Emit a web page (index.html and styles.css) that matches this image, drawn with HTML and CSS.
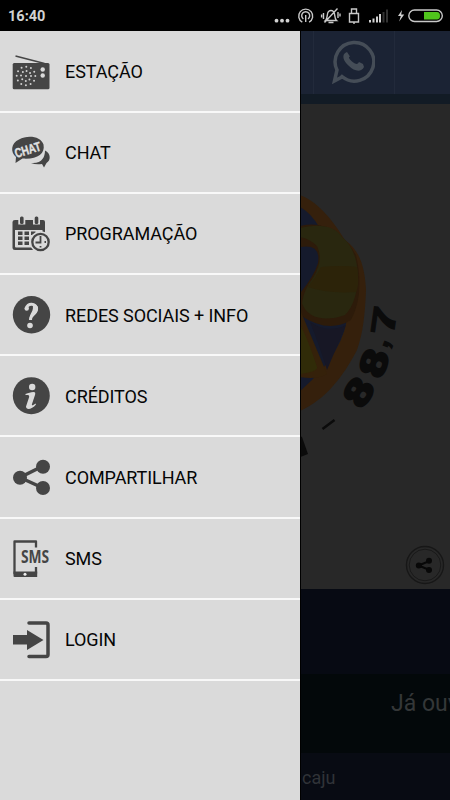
FILE: index.html
```html
<!DOCTYPE html>
<html lang="pt-BR">
<head>
<meta charset="utf-8">
<title>Rádio</title>
<link rel="stylesheet" href="styles.css">
</head>
<body>
<header class="status">
  <span class="clock">16:40</span>
  <svg class="status-icons" width="180" height="31" viewBox="270 0 180 31" fill="none" stroke="#c9c9c9" stroke-width="1.4">
    <g fill="#d2d2d2" stroke="none"><circle cx="276.500" cy="20.700" r="1.900"/><circle cx="282" cy="20.700" r="1.900"/><circle cx="287.500" cy="20.700" r="1.900"/></g>
    <path d="M302.300 22.200a7 7 0 1 1 6.800 0M303.400 19a4 4 0 1 1 4.600 0M305.700 15v7"/>
    <path d="M325.500 20.500c2.500-2 1-7 3-9q2.500-2 5 0c2 2 .5 7 3 9zM328.500 22.500h5M324.500 22.500L337.500 8.500M323.500 13v6M321.600 14.500v3M338 12v6M340 13.500v3"/>
    <path d="M349.500 13.500h9v8.500h-9zM351.500 13V9h5v4M354 22v2"/>
    <g fill="#d2d2d2" stroke="none"><path d="M369 20h2v2.500h-2zM372.500 18.500h2V22.500h-2zM376 16.500h2v6h-2zM379 14h2v8.500h-2z"/><path fill="#333" d="M382.500 12h2v10.500h-2zM386 9.500h2v13h-2z"/><path d="M402 10l-4 6h2.800l-1.600 5.500 5-7h-3z"/></g>
    <rect x="408.800" y="10" width="33.500" height="11.500" rx="5.700"/>
    <path fill="#50c51c" stroke="none" d="M424 12h13q3 0 3 3.800t-3 3.800h-13z"/>
  </svg>
</header>
<div class="screen">
  <nav class="drawer">
    <a class="item"><svg class="icon" viewBox="0 0 40 40"><path d="M5.500 4l29 7.500" stroke="#454545" stroke-width="1.500"/><rect x="2.700" y="11" width="36.800" height="26.300" rx="1.500"/><g fill="#dadada"><circle cx="32.700" cy="17.500" r="2.200"/><circle cx="32.700" cy="23.500" r="2.200"/></g><g fill="none" stroke="#d0d0d0" stroke-width="2" stroke-linecap="round"><circle cx="16" cy="24" r="9.300" stroke-dasharray="0 4.869"/><circle cx="16" cy="24" r="5" stroke-dasharray="0 3.927"/><path d="M16 24h.01"/></g></svg><span>ESTAÇÃO</span></a>
    <a class="item"><svg class="icon" viewBox="0 0 40 40"><path d="M21 30c11 1 14-6 14-12.500 6 3 6 10 1.500 12.500l-2.500 4.500-2-3.500q-6 1-11-1z"/><path d="M5.500 30l.5-6C0 19 1 10 9 6.500c9-5 22-3 24.500 5 2 10-7 15-21 14z"/><text x="6" y="25" transform="rotate(-17 6 24)" font-family="Liberation Sans" font-weight="700" font-size="13" textLength="26.500" lengthAdjust="spacingAndGlyphs" fill="#e2e2e2" stroke="#e2e2e2" stroke-width=".4">CHAT</text></svg><span>CHAT</span></a>
    <a class="item"><svg class="icon" viewBox="0 0 40 40"><path d="M5 6h28q2 0 2 2v28H5q-2.500 0-2.500-2.500V8q0-2 2.500-2z"/><path fill="#dadada" d="M5 16h27.500v17.500H6q-1 0-1-1zM8.300 2.500h7v8h-7zM23 2.500h7v8h-7z"/><rect x="10" y="2.500" width="3.600" height="7.500" rx="1.500"/><rect x="24.700" y="2.500" width="3.600" height="7.500" rx="1.500"/><path d="M8 17.500h4.500v3.500H8zM14.500 17.500H19v3.500h-4.500zM21 17.500h4.500v3.500H21zM8 22.500h4.500V26H8zM14.500 22.500H19V26h-4.500zM8 27.500h4.500V31H8zM14.500 27.500H19V31h-4.500z"/><circle cx="30.500" cy="28" r="10.800" fill="#dadada"/><circle cx="30.500" cy="28" r="8.200" fill="#dadada" stroke="#454545" stroke-width="2.300"/><path d="M30.500 22v6.500h-5M30.500 32v1.500M34.500 28h1.500" fill="none" stroke="#454545" stroke-width="1.800"/></svg><span>PROGRAMAÇÃO</span></a>
    <a class="item"><svg class="icon" viewBox="0 0 40 40"><circle cx="21.500" cy="19.700" r="18.700"/><path d="M16.500 13.500c0-6 10.500-5.500 10 .5-.5 5-6 5-6 11" fill="none" stroke="#dadada" stroke-width="3"/><path d="M24 9c7 2 4 10-1 12-2 1-2 2-2.500 4h-1c0-8 5-8 3-16z" fill="#dadada"/><circle cx="16.700" cy="13.500" r="2.200" fill="#dadada"/><circle cx="20" cy="30.500" r="2.800" fill="#dadada"/></svg><span>REDES SOCIAIS + INFO</span></a>
    <a class="item"><svg class="icon" viewBox="0 0 40 40"><circle cx="21.300" cy="19.700" r="18.500"/><g fill="#dadada"><circle cx="22.200" cy="11" r="3.200"/><path d="M15.500 18c3-1 5-2 8-2 2 0 2 1 1.500 3l-3 9c-.5 2 1 1.500 3.500-.5l.5 1c-4 5-10 6-10 2l3-9c.8-3-1-2-3.500-2.500z"/></g></svg><span>CRÉDITOS</span></a>
    <a class="item"><svg class="icon" viewBox="0 0 40 40"><path d="M33 8L10 19.500 33 30" fill="none" stroke="#454545" stroke-width="3.500"/><circle cx="33" cy="8.800" r="7"/><circle cx="10" cy="19.800" r="7"/><circle cx="33" cy="30" r="7"/></svg><span>COMPARTILHAR</span></a>
    <a class="item"><svg class="icon" viewBox="0 0 40 40"><path d="M26 8.500V2.500H4.500v32H26V28" fill="none" stroke="#454545" stroke-width="2.300" stroke-linejoin="round"/><path d="M3.500 32.500h23.700v5.500H4.500q-1 0-1-1z"/><circle cx="15" cy="35.200" r="1.500" fill="#eee"/><text x="11" y="23.500" font-family="Open Sans" font-weight="700" font-size="17" textLength="28" lengthAdjust="spacingAndGlyphs">SMS</text></svg><span>SMS</span></a>
    <a class="item"><svg class="icon" viewBox="0 0 40 40"><path d="M19 3h17q2 0 2 2v29.500q0 2-2 2H19" fill="none" stroke="#454545" stroke-width="3.500" stroke-linecap="round"/><path d="M3 15h14v-5l16.500 10L17 30v-5.500H3z"/></svg><span>LOGIN</span></a>
  </nav>
  <main class="app">
    <div class="toolbar">
      <div class="tab first"></div>
      <div class="tab whatsapp"><svg width="44" height="46" viewBox="331 39 44 46"><g fill="none" stroke="#454d57"><path d="M341 77.500L334.500 81l2.500-11a19.300 19.300 0 1 1 5 6.500z" stroke-width="3.500"/></g><path fill="#454d57" d="M347 52c-6 2-4 9 2 14 5 5 12 7 15 1l-1-3-4-2q-2 4-7-.5t-2-5z"/></svg></div>
      <div class="tab"></div>
    </div>
    <div class="strip"></div>
    <section class="art">
      <svg class="emblem" width="150" height="485" viewBox="300 104 150 485">
        <path fill="#35200c" d="M300 195C319 202 334 222 345 240C361 251 365 270 366 290C365 315 363 333 357 350C343 377 325 400 300 411z"/>
        <path fill="#151a2c" d="M300 207Q311 213 319 227L348 310Q346 352 300 391z"/>
        <path fill="#2d1b0a" d="M300 226Q334 218 356 255Q365 294 351 320Q328 334 300 315z"/>
        <path fill="#35210a" d="M301 312L327 374Q317 380 300 377z"/>
        <path fill="#302b08" d="M301 326Q309 342 317 367Q318 372 300 374z"/>
        <path fill="#151a2c" d="M301 247Q321 244 318 263Q314 276 301 292z"/>
        <path fill="#29270f" d="M300 228Q331 221 342 237Q357 249 358 276Q357 303 345 315C326 322 307 319 302 303Q304 289 313 278Q324 260 317 246Q310 239 300 237z"/>
        <path fill="#2c2309" d="M321 267Q342 265 357 267L358 276Q359 286 356 292Q328 294 308 287Q316 277 321 267z"/>
        <path fill="#171725" d="M310 322Q328 334 346 325L327 370Q319 344 310 322z"/>
        <g fill="#0b0b0b" stroke="#0b0b0b" stroke-width="2.500" font-family="Liberation Sans" font-weight="700" text-anchor="middle" font-size="36">
          <text y="12.500" transform="translate(358.500 392) rotate(-58) scale(1.300 1)">8</text>
          <text y="12.500" transform="translate(374 363) rotate(-72) scale(1.300 1)">8</text>
          <text transform="translate(388 345) rotate(-68)" font-size="30" stroke-width="1">,</text>
          <text y="12" transform="translate(384 320.500) rotate(-82) scale(1.500 .95)" font-size="35" stroke-width="1">7</text>
        </g>
        <path d="M322.500 429L334.500 420" stroke="#0b0b0b" stroke-width="2.500"/>
        <path fill="#0b0b0b" d="M300 436l2 1 6 17-8 3z"/>
      </svg>
      <svg class="share" width="40" height="40" viewBox="0 0 40 40"><circle cx="20" cy="20" r="18.500" fill="none" stroke="#171717" stroke-width="1.400"/><circle cx="20" cy="20" r="15.800" fill="none" stroke="#191919"/><path d="M24.500 16L13.500 20.500 24.500 25" fill="none" stroke="#080808" stroke-width="2"/><g fill="#080808"><circle cx="24" cy="15.800" r="3"/><circle cx="13.800" cy="20.500" r="3"/><circle cx="24" cy="25" r="3"/></g></svg>
    </section>
    <section class="player"></section>
    <section class="ticker">Já ouv</section>
    <footer class="city">caju</footer>
  </main>
</div>
</body>
</html>
```
FILE: styles.css
```css
* { box-sizing: border-box; }
body {
  margin: 0;
  width: 450px;
  height: 800px;
  overflow: hidden;
  background: #000;
  font-family: Roboto, sans-serif;
}
.status {
  height: 31px;
  display: flex;
  justify-content: space-between;
  align-items: center;
  padding-left: 8px;
  background: #000;
}
.clock {
  color: #d2d2d2;
  font-size: 14.500px;
  font-weight: 700;
  padding-top: 1px;
}
.status-icons { display: block; }
.screen { display: flex; height: 769px; }
.drawer { width: 300px; padding-top: 0.500px; background: #dadada; }
.item {
  height: 81.200px;
  display: flex;
  align-items: center;
  gap: 15px;
  padding-left: 10px;
  border-bottom: 2px solid #f8f8f8;
  color: #060606;
  font-size: 18px;
  letter-spacing: -0.08px;
}
.item span { padding-top: 1px; white-space: nowrap; }
.icon {
  width: 40px;
  height: 40px;
  flex: none;
  margin-top: 1px;
  overflow: visible;
  fill: #454545;
}
.app {
  width: 150px;
  overflow: hidden;
  display: flex;
  flex-direction: column;
  border-left: 1px solid #000;
}
.toolbar { height: 63px; display: flex; background: #1b2334; }
.tab { flex: 1; }
.tab.first { flex: 0 0 13px; border-right: 1px solid #222a3b; }
.tab.whatsapp {
  flex: 0 0 81px;
  border-right: 1px solid #222a3b;
  padding: 8px 0 0 17px;
}
.strip { height: 10px; background: #121b25; }
.art { position: relative; height: 485px; background: #282828; }
.emblem { display: block; margin-left: -1px; }
.share { position: absolute; right: 5px; bottom: 4px; }
.player { height: 85px; background: #070a13; }
.ticker {
  height: 79px;
  padding: 16px 0 0 90px;
  background: #03080a;
  color: #343738;
  font-size: 23px;
  white-space: nowrap;
}
.city {
  flex: 1;
  padding: 14px 0 0 1px;
  background: #080b13;
  color: #303338;
  font-size: 18px;
}
```
